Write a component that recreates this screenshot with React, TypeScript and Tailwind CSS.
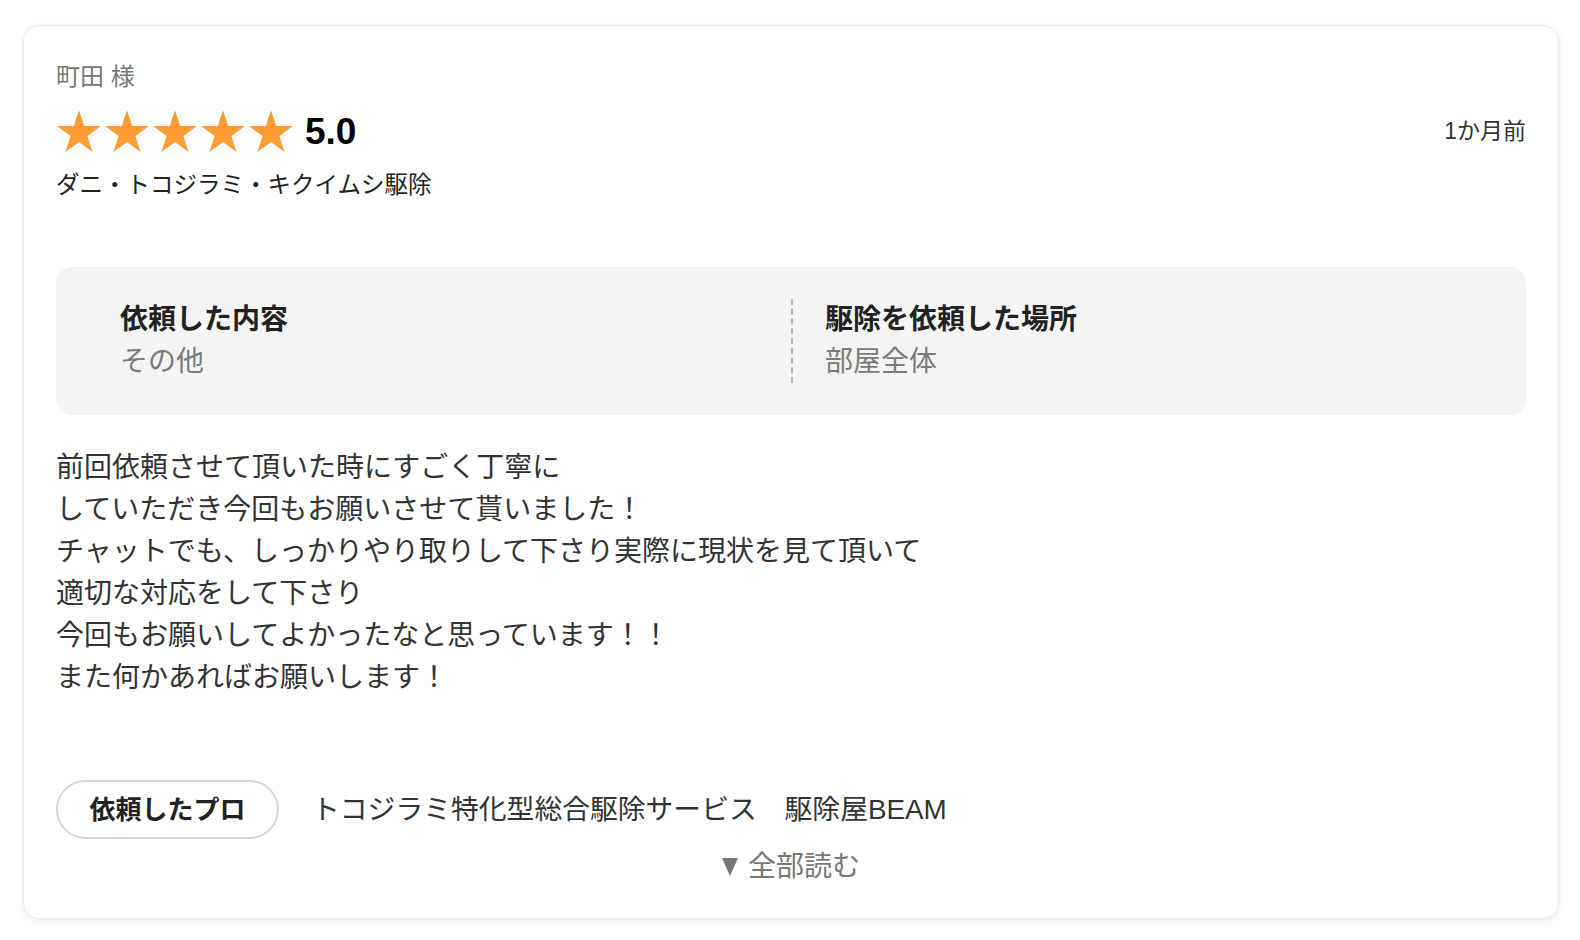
import React from "react";

const STAR_POINTS =
  "0,-50 11.23,-15.45 47.55,-15.45 18.17,5.9 29.39,40.45 0,19.1 -29.39,40.45 -18.17,5.9 -47.55,-15.45 -11.23,-15.45";

function Star() {
  return (
    <svg
      width="44"
      height="42"
      viewBox="-47.55 -50 95.1 90.45"
      className="block shrink-0"
    >
      <polygon points={STAR_POINTS} fill="#fd9c31" />
    </svg>
  );
}

const reviewBody = `前回依頼させて頂いた時にすごく丁寧に
していただき今回もお願いさせて貰いました！
チャットでも、しっかりやり取りして下さり実際に現状を見て頂いて
適切な対応をして下さり
今回もお願いしてよかったなと思っています！！
また何かあればお願いします！`;

export default function App() {
  return (
    <div className="min-h-[940px] w-[1580px] bg-white pt-[25px] font-['Liberation_Sans','Noto_Sans_CJK_JP',sans-serif]">
      <div className="ml-[23px] w-[1536px] rounded-2xl border border-[#ebebeb] bg-white px-8 pt-[33px] pb-[30px] shadow-[0_2px_6px_rgba(0,0,0,0.08)]">
        {/* Reviewer */}
        <div className="text-[24px] leading-[36px] text-[#777]">町田 様</div>

        {/* Rating + date */}
        <div className="mt-3 flex h-12 items-center justify-between">
          <div className="flex items-center">
            <div className="flex items-center gap-1 pl-px">
              <Star />
              <Star />
              <Star />
              <Star />
              <Star />
            </div>
            <span className="ml-3 text-[37px] font-bold leading-none text-black">
              5.0
            </span>
          </div>
          <span className="text-[23px] leading-[36px] text-[#333]">1か月前</span>
        </div>

        <div className="mt-3 text-[23.5px] leading-[36px] text-[#222]">
          ダニ・トコジラミ・キクイムシ駆除
        </div>

        {/* Request details */}
        <div className="mt-16 grid grid-cols-2 rounded-2xl bg-[#f4f4f4] px-8 py-8">
          <div className="px-8">
            <div className="text-[28px] font-bold leading-[42px] text-[#222]">
              依頼した内容
            </div>
            <div className="text-[28px] leading-[42px] text-[#7a7a7a]">その他</div>
          </div>
          <div className="border-l-2 border-dashed border-[#b4b4b4] px-8">
            <div className="text-[28px] font-bold leading-[42px] text-[#222]">
              駆除を依頼した場所
            </div>
            <div className="text-[28px] leading-[42px] text-[#7a7a7a]">部屋全体</div>
          </div>
        </div>

        {/* Body */}
        <p className="mt-8 whitespace-pre-line text-[28px] leading-[42px] text-[#333]">
          {reviewBody}
        </p>

        {/* Pro */}
        <div className="mt-[81px] flex items-center gap-[33px]">
          <div className="flex h-[59px] w-[223px] items-center justify-center rounded-full border-2 border-[#d6d6d6] bg-white">
            <span className="text-[26px] font-bold leading-none text-[#222]">
              依頼したプロ
            </span>
          </div>
          <span className="text-[27.8px] leading-[42px] text-[#333]">
            トコジラミ特化型総合駆除サービス　駆除屋BEAM
          </span>
        </div>

        {/* Read more */}
        <div className="mt-[7px] flex h-[42px] items-center justify-center gap-[10px] text-[#777]">
          <svg width="16" height="18" viewBox="0 0 16 18" className="block">
            <polygon points="0,0 16,0 8,18" fill="#777" />
          </svg>
          <span className="text-[28px] leading-[42px]">全部読む</span>
        </div>
      </div>
    </div>
  );
}
